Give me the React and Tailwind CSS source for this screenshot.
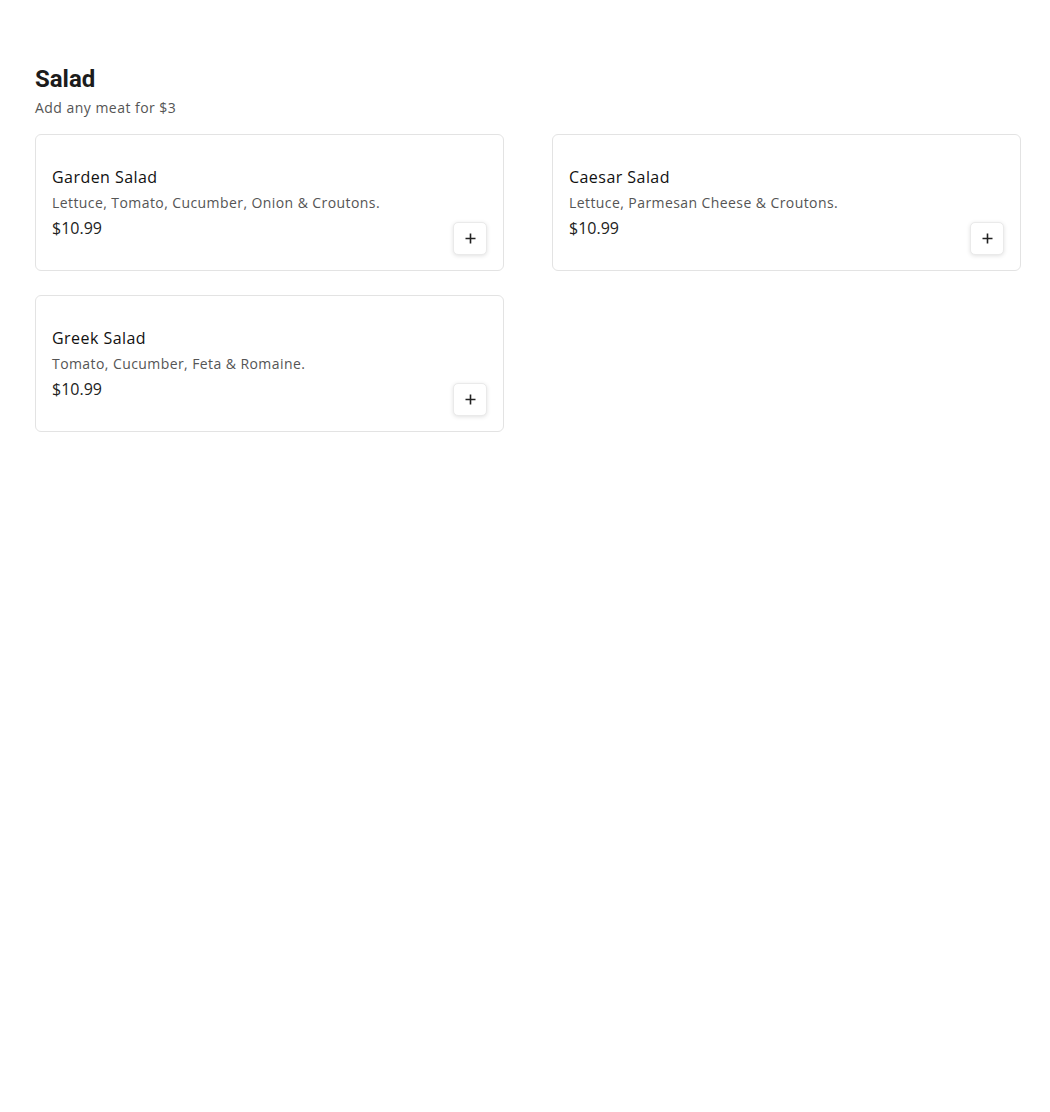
import React from 'react';

const items = [
  { name: 'Garden Salad', desc: 'Lettuce, Tomato, Cucumber, Onion & Croutons.', price: '$10.99' },
  { name: 'Caesar Salad', desc: 'Lettuce, Parmesan Cheese & Croutons.', price: '$10.99' },
  { name: 'Greek Salad', desc: 'Tomato, Cucumber, Feta & Romaine.', price: '$10.99' },
];

const PlusIcon = () => (
  <svg width="11" height="11" viewBox="0 0 11 11" fill="none" stroke="#222" strokeWidth="1.6">
    <path d="M5.5 0.5v10M0.5 5.5h10" />
  </svg>
);

const MenuCard = ({ name, desc, price }) => (
  <div className="relative h-[137px] rounded-[6px] border border-[#e3e3e3] bg-white pl-[16px] pr-[16px] pt-[31px]">
    <h3 className="text-[16px] leading-[22px] font-medium text-[#111] tracking-[0.45px]">{name}</h3>
    <p className="mt-[6px] text-[14px] leading-[18px] text-[#555] tracking-[0.42px]">{desc}</p>
    <div className="mt-[6px] text-[16px] leading-[20px] text-[#222]">{price}</div>
    <button className="absolute right-[16px] bottom-[15px] flex h-[33px] w-[34px] items-center justify-center rounded-[5px] border border-[#eaeaea] bg-white shadow-[0_1px_4px_rgba(0,0,0,0.12)]">
      <PlusIcon />
    </button>
  </div>
);

const App = () => {
  return (
    <div className="min-h-[1112px] bg-white px-[35px] pt-[64px] font-['Open_Sans',sans-serif]">
      <h1 className="font-['Roboto',sans-serif] text-[24px] leading-[30px] font-bold text-[#1c1c1c]">Salad</h1>
      <p className="mt-[4px] text-[14px] leading-[20px] text-[#555] tracking-[0.47px]">Add any meat for $3</p>
      <div className="mt-[16px] grid w-[986px] grid-cols-2 gap-x-[48px] gap-y-[24px]">
        {items.map((it) => (
          <MenuCard key={it.name} {...it} />
        ))}
      </div>
    </div>
  );
};

export default App;
